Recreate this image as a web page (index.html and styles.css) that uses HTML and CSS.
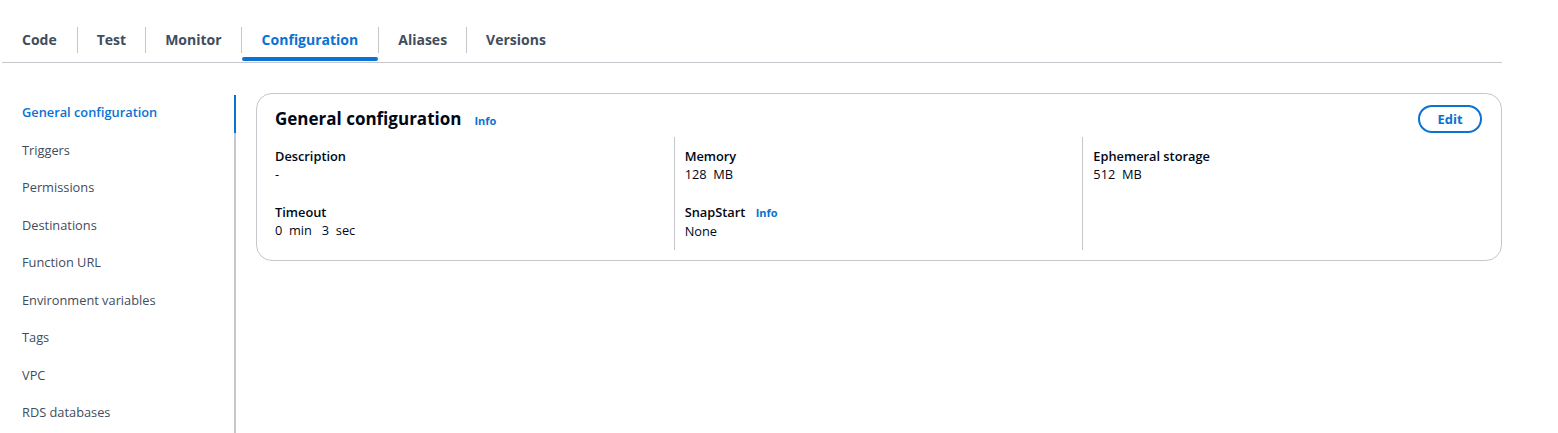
FILE: index.html
```html
<!DOCTYPE html>
<html lang="en">
<head>
<meta charset="utf-8">
<title>General configuration</title>
<link rel="stylesheet" href="styles.css">
</head>
<body>
<div class="page">
  <nav class="tabs">
    <div class="tab">Code</div>
    <div class="tab">Test</div>
    <div class="tab">Monitor</div>
    <div class="tab active">Configuration</div>
    <div class="tab">Aliases</div>
    <div class="tab">Versions</div>
  </nav>
  <div class="main">
    <ul class="sidenav">
      <li class="nav-item active">General configuration</li>
      <li class="nav-item">Triggers</li>
      <li class="nav-item">Permissions</li>
      <li class="nav-item">Destinations</li>
      <li class="nav-item">Function URL</li>
      <li class="nav-item">Environment variables</li>
      <li class="nav-item">Tags</li>
      <li class="nav-item">VPC</li>
      <li class="nav-item">RDS databases</li>
    </ul>
    <section class="card">
      <header class="card-header">
        <div class="title-wrap">
          <h2 class="card-title">General configuration</h2>
          <span class="info">Info</span>
        </div>
        <button class="btn">Edit</button>
      </header>
      <div class="cols">
        <div class="col">
          <div class="field">
            <div class="label">Description</div>
            <div class="value">-</div>
          </div>
          <div class="field">
            <div class="label">Timeout</div>
            <div class="value">0&nbsp; min &nbsp; 3&nbsp; sec</div>
          </div>
        </div>
        <div class="col">
          <div class="field">
            <div class="label">Memory</div>
            <div class="value">128&nbsp; MB</div>
          </div>
          <div class="field">
            <div class="label">SnapStart <span class="info">Info</span></div>
            <div class="value">None</div>
          </div>
        </div>
        <div class="col">
          <div class="field">
            <div class="label">Ephemeral storage</div>
            <div class="value">512&nbsp; MB</div>
          </div>
        </div>
      </div>
    </section>
  </div>
</div>
</body>
</html>
```

FILE: styles.css
```css
* { box-sizing: border-box; }
html, body { margin: 0; padding: 0; background: #ffffff; }
body {
  font-family: "Open Sans", "Noto Sans", sans-serif;
  font-size: 12.8px;
  color: #000716;
}
.page {
  width: 1500px;
  margin-left: 2px;
  padding-top: 20px;
}
.tabs {
  display: flex;
  border-bottom: 1px solid #c6c6cd;
  height: 43px;
}
.tab {
  position: relative;
  padding: 0 19px;
  height: 26px;
  margin-top: 7px;
  line-height: 26px;
  font-weight: 700;
  font-size: 14px;
  color: #414d5c;
  border-left: 1px solid #c6c6cd;
}
.tab:first-child { border-left: none; padding: 0 20px; }
.tab.active { color: #0972d3; padding: 0 20px; }
.tab.active::after {
  content: "";
  position: absolute;
  left: 0;
  right: 0;
  bottom: -8px;
  height: 4px;
  border-radius: 2px;
  background: #0972d3;
}
.main {
  display: flex;
  align-items: flex-start;
  gap: 20px;
  padding-top: 30px;
}
.sidenav {
  list-style: none;
  margin: 2px 0 0 0;
  padding: 0;
  width: 234px;
  border-right: 2px solid #c6c6cd;
  min-height: 340px;
}
.nav-item {
  position: relative;
  padding: 8px 20px 10px 20px;
  line-height: 19.5px;
  color: #414d5c;
}
.nav-item.active {
  color: #0972d3;
  font-weight: 600;
}
.nav-item.active::after {
  content: "";
  position: absolute;
  right: -2px;
  top: 0;
  bottom: 0;
  width: 2px;
  background: #0972d3;
}
.card {
  flex: 1;
  border: 1px solid #c6c6cd;
  border-radius: 16px;
  padding: 0 10px 10px 8px;
}
.card-header {
  display: flex;
  justify-content: space-between;
  align-items: flex-start;
  padding: 11px 9px 0 10px;
  height: 43px;
}
.title-wrap {
  display: flex;
  align-items: baseline;
  gap: 13px;
  padding-top: 1px;
}
.card-title {
  margin: 0;
  font-size: 17px;
  font-weight: 700;
  line-height: 26px;
  color: #000716;
}
.info {
  font-size: 11px;
  font-weight: 700;
  color: #0972d3;
}
.label .info { margin-left: 7px; }
.btn {
  height: 28px;
  width: 64px;
  border: 2px solid #0972d3;
  border-radius: 20px;
  background: #fff;
  color: #0972d3;
  font-family: inherit;
  font-size: 13px;
  font-weight: 700;
  padding: 0;
}
.cols {
  display: grid;
  grid-template-columns: 1fr 1fr 1fr;
}
.col {
  padding: 10px 10px 10px 10px;
  border-left: 1px solid #c6c6cd;
  min-height: 112px;
}
.col:first-child { border-left: none; }
.field + .field { margin-top: 20px; }
.label {
  font-weight: 600;
  line-height: 18px;
  color: #000716;
}
.value {
  line-height: 18px;
  color: #000716;
}
```
